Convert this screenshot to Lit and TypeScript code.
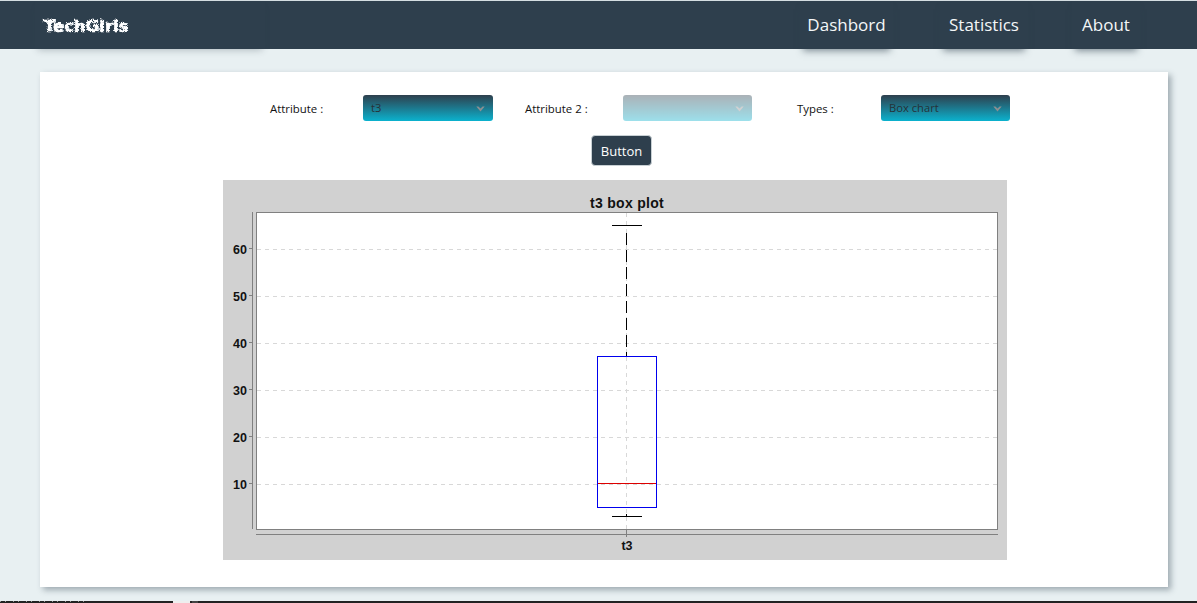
import { LitElement, html, css, svg } from 'lit';
import { customElement, property } from 'lit/decorators.js';

const FONT = "'Open Sans', 'Noto Sans', sans-serif";

@customElement('drop-down')
export class DropDown extends LitElement {
  @property({ type: String }) value = '';
  @property({ type: Boolean, reflect: true }) disabled = false;

  static styles = css`
    :host {
      display: block;
      width: 130px;
      height: 26px;
      box-sizing: border-box;
      padding: 0 8px 0 8px;
      border-radius: 3px;
      background: linear-gradient(#2e3f4d, #0bb2ce);
      color: #263238;
      font-size: 11.2px;
      line-height: 24px;
    }
    :host([disabled]) {
      opacity: 0.4;
    }
    .inner {
      display: flex;
      justify-content: space-between;
      align-items: center;
      height: 100%;
    }
    svg {
      width: 9px;
      height: 6px;
      flex: none;
      margin-top: 1px;
    }
  `;

  render() {
    return html`
      <div class="inner">
        <span>${this.value}</span>
        <svg viewBox="0 0 9 6"><path d="M0.3 0.5 L4.5 5.5 L8.7 0.5 L6.6 0.5 L4.5 2.6 L2.4 0.5 Z" fill="#8a8f92"></path></svg>
      </div>
    `;
  }
}

@customElement('box-plot')
export class BoxPlot extends LitElement {
  static styles = css`
    :host {
      display: block;
      width: 784px;
      height: 380px;
      background: #d1d1d1;
    }
    svg {
      display: block;
    }
    text {
      font-family: 'Liberation Sans', Arial, sans-serif;
      font-weight: bold;
      fill: #111;
    }
  `;

  render() {
    // coordinates are relative to the grey panel
    const ticks = [
      { label: '60', y: 69.5 },
      { label: '50', y: 116.5 },
      { label: '40', y: 163.5 },
      { label: '30', y: 210.5 },
      { label: '20', y: 257.5 },
      { label: '10', y: 304.5 },
    ];
    return html`
      <svg width="784" height="380" viewBox="0 0 784 380">
        <text x="404" y="28" text-anchor="middle" font-size="14" letter-spacing="0.3">t3 box plot</text>
        <rect x="33.5" y="32.5" width="741" height="317" fill="#fff" stroke="#808080"></rect>
        <line x1="29.5" y1="32" x2="29.5" y2="349" stroke="#808080"></line>
        <line x1="33" y1="354.5" x2="775" y2="354.5" stroke="#808080"></line>
        ${ticks.map(t => svg`
          <line x1="34" y1=${t.y} x2="774" y2=${t.y} stroke="#d8d8d8" stroke-dasharray="4 4"></line>
          <line x1="26" y1=${t.y - 1} x2="29" y2=${t.y - 1} stroke="#808080"></line>
          <text x="24" y=${t.y + 4} text-anchor="end" font-size="12.5">${t.label}</text>
        `)}
        <line x1="403.5" y1="33" x2="403.5" y2="349" stroke="#d8d8d8" stroke-dasharray="4 4"></line>
        <line x1="403.5" y1="350" x2="403.5" y2="357" stroke="#808080"></line>
        <line x1="403.5" y1="53" x2="403.5" y2="176" stroke="#000" stroke-dasharray="12 5"></line>
        <line x1="403.5" y1="334" x2="403.5" y2="336" stroke="#000"></line>
        <line x1="389" y1="45.5" x2="419" y2="45.5" stroke="#000"></line>
        <line x1="389" y1="336.5" x2="419" y2="336.5" stroke="#000"></line>
        <rect x="374.5" y="176.5" width="59" height="151" fill="none" stroke="#0000ee"></rect>
        <line x1="375" y1="303.5" x2="433" y2="303.5" stroke="#dd0000"></line>
        <text x="404" y="370" text-anchor="middle" font-size="12.5">t3</text>
      </svg>
    `;
  }
}

@customElement('app-root')
export class AppRoot extends LitElement {
  static styles = css`
    :host {
      display: flex;
      flex-direction: column;
      height: 603px;
      overflow: hidden;
      background: #e8f0f2;
      font-family: ${css([FONT] as unknown as TemplateStringsArray)};
    }
    .navbar {
      flex: none;
      display: flex;
      justify-content: space-between;
      height: 49px;
      box-sizing: border-box;
      border-top: 1px solid #d5dee2;
      padding-left: 35px;
      background: #2e3f4d;
      position: relative;
    }
    .brand {
      width: 230px;
      padding-left: 8px;
      box-sizing: border-box;
      color: #fff;
      box-shadow: 0 4px 7px -3px rgba(46, 63, 77, 0.3);
    }
    .brand span {
      display: inline-block;
      font-family: 'DejaVu Sans', sans-serif;
      font-size: 16.5px;
      font-weight: bold;
      line-height: 49px;
      -webkit-text-stroke: 0.5px #fff;
      text-shadow: 0.5px 0 0 #cfe6f5;
      filter: url(#rough);
    }
    .defs {
      position: absolute;
      width: 0;
      height: 0;
    }
    .links {
      display: flex;
    }
    .links a {
      color: #f4f7f8;
      font-size: 17px;
      line-height: 48px;
      text-align: center;
      box-shadow: 0 5px 7px -3px rgba(46, 63, 77, 0.55);
    }
    .links a:nth-child(1) { width: 93px; margin-right: 47px; }
    .links a:nth-child(2) { width: 88px; margin-right: 44px; }
    .links a:nth-child(3) { width: 68px; margin-right: 57px; }
    main {
      flex: 1;
      padding: 23px 29px 14px 40px;
      min-height: 0;
    }
    .card {
      height: 515px;
      box-sizing: border-box;
      padding-top: 23px;
      background: #fff;
      box-shadow: 3px 3px 6px rgba(46, 63, 77, 0.4);
    }
    .filters {
      display: flex;
      align-items: center;
      padding-left: 230px;
      font-size: 11.4px;
      color: #111;
    }
    .filters label {
      flex: none;
    }
    .filters label:nth-of-type(1) { width: 93px; }
    .filters label:nth-of-type(2) { width: 98px; margin-left: 32px; }
    .filters label:nth-of-type(3) { width: 84px; margin-left: 45px; }
    .filters drop-down:nth-of-type(n + 2) { width: 129px; }
    button {
      display: block;
      width: 61px;
      height: 31px;
      margin: 14px 0 14px 551px;
      padding: 0;
      border: 1px solid #c8d0d4;
      border-radius: 4px;
      background: #2e3f4d;
      color: #fff;
      font: 13px ${css([FONT] as unknown as TemplateStringsArray)};
    }
    box-plot {
      margin-left: 183px;
    }
    .taskbar {
      flex: none;
      display: flex;
      height: 2px;
      background: #222;
    }
    .taskbar i {
      height: 2px;
    }
    .taskbar .ticks {
      width: 90px;
      margin-right: 83px;
      height: 1px;
      background: repeating-linear-gradient(90deg, #999 0 1px, #222 1px 5px, #999 5px 6px, #222 6px 13px);
    }
    .taskbar .tab {
      width: 17px;
      margin-right: 2px;
      background: #eee;
    }
    .taskbar .tab2 {
      width: 6px;
      background: #444;
    }
  `;

  render() {
    return html`
      <header class="navbar">
        <svg class="defs">
          <filter id="rough" x="-5%" y="-5%" width="110%" height="110%">
            <feTurbulence type="turbulence" baseFrequency="0.7" numOctaves="2" seed="7" result="noise"></feTurbulence>
            <feDisplacementMap in="SourceGraphic" in2="noise" scale="3" xChannelSelector="R" yChannelSelector="G"></feDisplacementMap>
          </filter>
        </svg>
        <div class="brand"><span>TechGirls</span></div>
        <nav class="links">
          <a>Dashbord</a>
          <a>Statistics</a>
          <a>About</a>
        </nav>
      </header>
      <main>
        <section class="card">
          <div class="filters">
            <label>Attribute :</label>
            <drop-down value="t3"></drop-down>
            <label>Attribute 2 :</label>
            <drop-down disabled></drop-down>
            <label>Types :</label>
            <drop-down value="Box chart"></drop-down>
          </div>
          <button>Button</button>
          <box-plot></box-plot>
        </section>
      </main>
      <div class="taskbar"><i class="ticks"></i><i class="tab"></i><i class="tab2"></i></div>
    `;
  }
}
